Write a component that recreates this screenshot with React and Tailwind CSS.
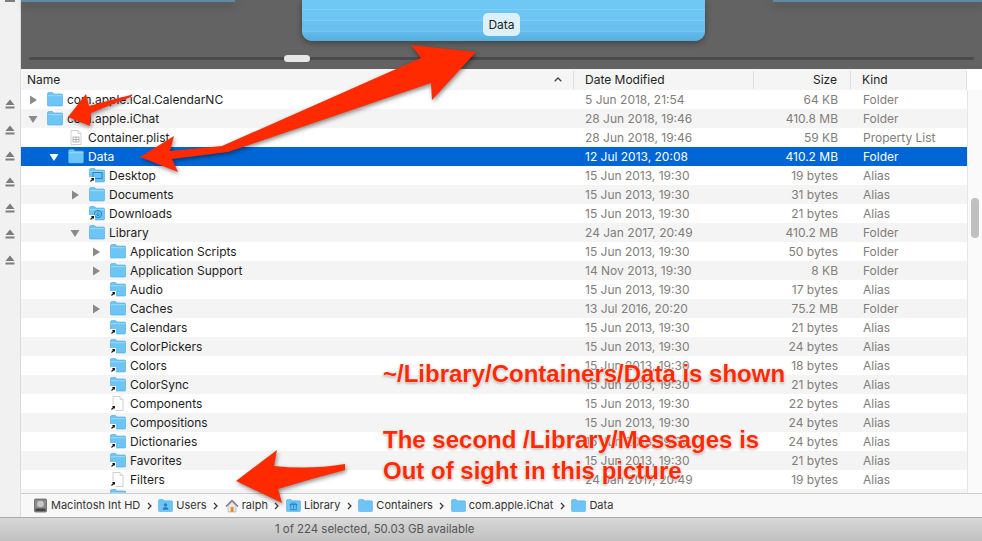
const rows = [
  { name: "com.apple.iCal.CalendarNC", date: "5 Jun 2018, 21:54", size: "64 KB", kind: "Folder", level: 0, arrow: "right", icon: "folder" },
  { name: "com.apple.iChat", date: "28 Jun 2018, 19:46", size: "410.8 MB", kind: "Folder", level: 0, arrow: "down", icon: "folder" },
  { name: "Container.plist", date: "28 Jun 2018, 19:46", size: "59 KB", kind: "Property List", level: 1, icon: "plist" },
  { name: "Data", date: "12 Jul 2013, 20:08", size: "410.2 MB", kind: "Folder", level: 1, arrow: "down", icon: "folder", selected: true },
  { name: "Desktop", date: "15 Jun 2013, 19:30", size: "19 bytes", kind: "Alias", level: 2, icon: "desktop" },
  { name: "Documents", date: "15 Jun 2013, 19:30", size: "31 bytes", kind: "Alias", level: 2, arrow: "right", icon: "folder" },
  { name: "Downloads", date: "15 Jun 2013, 19:30", size: "21 bytes", kind: "Alias", level: 2, icon: "downloads" },
  { name: "Library", date: "24 Jan 2017, 20:49", size: "410.2 MB", kind: "Folder", level: 2, arrow: "down", icon: "folder" },
  { name: "Application Scripts", date: "15 Jun 2013, 19:30", size: "50 bytes", kind: "Folder", level: 3, arrow: "right", icon: "folder" },
  { name: "Application Support", date: "14 Nov 2013, 19:30", size: "8 KB", kind: "Folder", level: 3, arrow: "right", icon: "folder" },
  { name: "Audio", date: "15 Jun 2013, 19:30", size: "17 bytes", kind: "Alias", level: 3, icon: "alias" },
  { name: "Caches", date: "13 Jul 2016, 20:20", size: "75.2 MB", kind: "Folder", level: 3, arrow: "right", icon: "folder" },
  { name: "Calendars", date: "15 Jun 2013, 19:30", size: "21 bytes", kind: "Alias", level: 3, icon: "alias" },
  { name: "ColorPickers", date: "15 Jun 2013, 19:30", size: "24 bytes", kind: "Alias", level: 3, icon: "alias" },
  { name: "Colors", date: "15 Jun 2013, 19:30", size: "18 bytes", kind: "Alias", level: 3, icon: "alias" },
  { name: "ColorSync", date: "15 Jun 2013, 19:30", size: "21 bytes", kind: "Alias", level: 3, icon: "alias" },
  { name: "Components", date: "15 Jun 2013, 19:30", size: "22 bytes", kind: "Alias", level: 3, icon: "filealias" },
  { name: "Compositions", date: "15 Jun 2013, 19:30", size: "24 bytes", kind: "Alias", level: 3, icon: "alias" },
  { name: "Dictionaries", date: "15 Jun 2013, 19:30", size: "24 bytes", kind: "Alias", level: 3, icon: "alias" },
  { name: "Favorites", date: "15 Jun 2013, 19:30", size: "21 bytes", kind: "Alias", level: 3, icon: "alias" },
  { name: "Filters", date: "24 Jan 2017, 20:49", size: "19 bytes", kind: "Alias", level: 3, icon: "filealias" },
];

const indents = ["pl-[5px]", "pl-[26px]", "pl-[47px]", "pl-[68px]"];

function AliasBadge() {
  return (
    <g>
      <rect x="0" y="9" width="6" height="6" fill="#fff" />
      <path d="M1.5 13.5 L4.2 10.8 M2.4 10.6 H4.4 V12.6" stroke="#111" strokeWidth="1.1" fill="none" />
    </g>
  );
}

function Folder({ children }) {
  return (
    <svg width="16" height="15" viewBox="0 0 16 15" className="shrink-0">
      <path d="M0.5 2 Q0.5 0.5 2 0.5 H5.5 L7 2 H14.5 Q15.5 2 15.5 3 V13 Q15.5 14 14.5 14 H1.5 Q0.5 14 0.5 13 Z" fill="#6cc5f5" stroke="#4ea8de" strokeWidth="0.6" />
      <rect x="0.8" y="3.2" width="14.4" height="1" fill="#9adcfb" />
      {children}
    </svg>
  );
}

function FilePage({ children }) {
  return (
    <svg width="16" height="15" viewBox="0 0 16 15" className="shrink-0">
      <path d="M3 0.5 H10 L13 3.5 V14.5 H3 Z" fill="#fff" stroke="#c4c4c4" strokeWidth="0.8" />
      <path d="M10 0.5 V3.5 H13" fill="#eee" stroke="#c4c4c4" strokeWidth="0.6" />
      {children}
    </svg>
  );
}

function RowIcon({ type }) {
  if (type === "plist") {
    return (
      <FilePage>
        <rect x="5" y="7" width="6" height="5" fill="#fff" stroke="#9a9a9a" strokeWidth="0.7" />
        <path d="M5 9.5 H11 M8 7 V12" stroke="#9a9a9a" strokeWidth="0.7" />
      </FilePage>
    );
  }
  if (type === "filealias") {
    return (
      <FilePage>
        <AliasBadge />
      </FilePage>
    );
  }
  if (type === "desktop") {
    return (
      <Folder>
        <rect x="4" y="4.5" width="9" height="6" fill="none" stroke="#2c83c4" strokeWidth="1" />
        <AliasBadge />
      </Folder>
    );
  }
  if (type === "downloads") {
    return (
      <Folder>
        <circle cx="9" cy="8" r="3.6" fill="none" stroke="#2c83c4" strokeWidth="1" />
        <path d="M9 5.5 V9.5 M7.4 8.2 L9 10 L10.6 8.2" stroke="#2c83c4" strokeWidth="0.9" fill="none" />
        <AliasBadge />
      </Folder>
    );
  }
  if (type === "alias") {
    return (
      <Folder>
        <AliasBadge />
      </Folder>
    );
  }
  return <Folder />;
}

function Disclosure({ dir, selected }) {
  const color = selected ? "#fff" : "#8a8a8a";
  return (
    <span className="mr-[7px] flex h-[19px] w-[14px] shrink-0 items-center justify-center">
      {dir && (
        <svg width="10" height="10" viewBox="0 0 10 10">
          {dir === "right" ? <path d="M2 0.5 L9 5 L2 9.5 Z" fill={color} /> : <path d="M0.5 2 H9.5 L5 9 Z" fill={color} />}
        </svg>
      )}
    </span>
  );
}

function Row({ row, index }) {
  const bg = row.selected ? "bg-[#0066d6]" : index % 2 === 1 ? "bg-[#f4f4f4]" : "bg-white";
  const name = row.selected ? "text-white" : "text-[#1d1d1d]";
  const meta = row.selected ? "text-white" : "text-[#827d7a]";
  return (
    <div className={`flex h-[19px] shrink-0 items-center ${bg}`}>
      <div className={`flex w-[564px] items-center ${indents[row.level]}`}>
        <Disclosure dir={row.arrow} selected={row.selected} />
        <RowIcon type={row.icon} />
        <span className={`ml-[4px] ${name}`}>{row.name}</span>
      </div>
      <span className={`w-[190px] ${meta}`}>{row.date}</span>
      <span className={`w-[63px] text-right ${meta} whitespace-nowrap`}>{row.size}</span>
      <span className={`ml-[25px] ${meta}`}>{row.kind}</span>
    </div>
  );
}

function Eject() {
  return (
    <svg width="10" height="10" viewBox="0 0 10 10" className="shrink-0">
      <path d="M5 0.5 L9.5 6 H0.5 Z M0.5 7.6 H9.5 V9.4 H0.5 Z" fill="#7d7d7d" />
    </svg>
  );
}

function Crumb({ children, icon, last }) {
  return (
    <>
      {icon}
      <span className="ml-[3px]">{children}</span>
      {!last && (
        <svg width="5" height="8" viewBox="0 0 5 8" className="mx-[6.5px] shrink-0">
          <path d="M1 1 L4 4 L1 7" fill="none" stroke="#333" strokeWidth="1.2" />
        </svg>
      )}
    </>
  );
}

function PathIconFolder({ glyph }) {
  return (
    <svg width="15" height="13" viewBox="0 0 16 14" className="shrink-0">
      <path d="M0.5 2 Q0.5 0.5 2 0.5 H5.5 L7 2 H14.5 Q15.5 2 15.5 3 V12.5 Q15.5 13.5 14.5 13.5 H1.5 Q0.5 13.5 0.5 12.5 Z" fill="#6cc5f5" stroke="#4ea8de" strokeWidth="0.6" />
      {glyph === "user" && <path d="M8 4.5 a1.8 1.8 0 1 1 -0.01 0 M4.8 11.5 Q5 8.5 8 8.5 Q11 8.5 11.2 11.5 Z" fill="#2a7fc0" />}
      {glyph === "lib" && <path d="M4 11.5 H12 M5 6.5 V10.5 M8 6.5 V10.5 M11 6.5 V10.5 M4 6 L8 4 L12 6 Z" stroke="#2a7fc0" strokeWidth="1" fill="none" />}
    </svg>
  );
}

function Annotations() {
  return (
    <>
      <svg width="982" height="541" viewBox="0 0 982 541" className="pointer-events-none absolute left-0 top-0 drop-shadow-[1px_2px_2px_rgba(0,0,0,0.45)]">
        <path d="M476 52 L411 45 L421 58 L222 146 L170 151 L174 136 L140 157 L178 172 L172 159 L228 152 L431 83 L432 100 Z" fill="#ff2a00" />
        <path d="M68 117 L86 94 L89 106 Q110 100 131 95 L131 97 Q110 105 91 113 L90 126 Z" fill="#ff2a00" />
        <path d="M236 481 L277 450 L274 466 Q310 470 345 464 L345 470 Q310 479 278 489 L282 503 Z" fill="#ff2a00" />
      </svg>
      <div className="absolute left-[383px] top-[360px] whitespace-nowrap font-['Liberation_Sans',sans-serif] text-[24px] font-bold leading-[28px] text-[#ff2a00] [text-shadow:0_0_2px_#fff,0_0_2px_#fff,0_1px_3px_rgba(0,0,0,0.5)]">~/Library/Containers/Data is shown</div>
      <div className="absolute left-[383px] top-[424px] whitespace-nowrap font-['Liberation_Sans',sans-serif] text-[24px] font-bold leading-[31px] text-[#ff2a00] [text-shadow:0_0_2px_#fff,0_0_2px_#fff,0_1px_3px_rgba(0,0,0,0.5)]">
        The second /Library/Messages is
        <br />
        Out of sight in this picture
      </div>
    </>
  );
}

export default function App() {
  return (
    <div className="relative flex h-[541px] w-[982px] flex-col overflow-hidden bg-white font-['Inter','Liberation_Sans',sans-serif] text-[12px] leading-[19px]">
      <div className="flex min-h-0 flex-1">
        {/* sidebar with eject buttons */}
        <div className="flex w-[21px] shrink-0 flex-col items-center gap-[16px] border-r border-[#dcdcdc] bg-[#f1f1f1]">
          <div className="mb-[81px] h-[2px] w-[10px] shrink-0 bg-[#7d7d7d]" />
          <Eject />
          <Eject />
          <Eject />
          <Eject />
          <Eject />
          <Eject />
          <Eject />
        </div>

        <div className="flex min-w-0 flex-1 flex-col">
          {/* gallery preview */}
          <div className="relative flex h-[69px] shrink-0 flex-col bg-[#636363]">
            <div className="flex h-[41px] shrink-0 items-start">
              <div className="h-[2px] w-[214px] bg-[#5d8ba5] shadow-[0_3px_8px_rgba(0,0,0,0.4)]" />
              <div className="relative ml-[67px] flex h-[41px] w-[403px] flex-col overflow-hidden rounded-b-[10px] bg-[#66bfee] shadow-[0_2px_6px_rgba(0,0,0,0.35)]">
                <div className="h-[9px] bg-[#6fc8f3]" />
                <div className="h-[11px] border-t border-[#7fd0f5] bg-[#6cc5f2]" />
                <div className="h-[11px] border-t border-[#7ccdf4] bg-[#68c1ef]" />
                <div className="flex-1 border-t border-[#74c6f0] bg-gradient-to-b from-[#62bbea] to-[#56aedf]" />
                <div className="absolute left-[181px] top-[13px] flex h-[23px] w-[37px] items-center justify-center rounded-[5px] bg-[#dcf0fa] text-[#222]">Data</div>
              </div>
              <div className="ml-[68px] h-[2px] flex-1 bg-[#5d8ba5] shadow-[0_3px_8px_rgba(0,0,0,0.4)]" />
            </div>
            <div className="relative mx-[8px] mt-[16px] h-[3px] rounded-full bg-[#4a4a4a]">
              <div className="absolute left-[255px] top-[-2px] h-[7px] w-[26px] rounded-full bg-[#e8e8e8]" />
            </div>
          </div>

          {/* column header */}
          <div className="mr-[15px] flex h-[22px] shrink-0 items-center border-b border-[#cfcfcf] bg-[#f5f5f5] text-[#222]">
            <div className="flex h-[18px] w-[553px] items-center justify-between border-r border-[#dedede] pl-[6px] pr-[11px]">
              <span>Name</span>
              <svg width="8" height="5" viewBox="0 0 8 5"><path d="M0.7 4.3 L4 1 L7.3 4.3" fill="none" stroke="#444" strokeWidth="1.3" /></svg>
            </div>
            <div className="flex h-[18px] w-[180px] items-center border-r border-[#dedede] pl-[11px]">Date Modified</div>
            <div className="flex h-[18px] w-[97px] items-center justify-end border-r border-[#dedede] pr-[13px]">Size</div>
            <div className="flex h-[18px] flex-1 items-center border-r border-[#dedede] pl-[11px]">Kind</div>
          </div>

          {/* file list */}
          <div className="-mt-[1px] flex min-h-0 flex-1">
            <div className="flex min-w-0 flex-1 flex-col overflow-hidden">
              {rows.map((row, i) => (
                <Row key={row.name} row={row} index={i} />
              ))}
              <div className="flex h-[19px] shrink-0 items-start bg-[#f4f4f4] pl-[89px]">
                <Folder />
              </div>
            </div>
            <div className="flex w-[15px] shrink-0 justify-center border-l border-[#e6e6e6] bg-[#fafafa] pt-[108px]">
              <div className="h-[40px] w-[8px] rounded-full bg-[#c0c0c0]" />
            </div>
          </div>

          {/* path bar */}
          <div className="flex h-[24px] shrink-0 items-center border-t border-[#cfcfcf] bg-[#f8f8f8] pl-[12px] text-[11px] text-[#333]">
            <Crumb icon={
              <svg width="15" height="15" viewBox="0 0 15 15" className="shrink-0">
                <rect x="1.5" y="1" width="12" height="13" rx="1" fill="#8b8b8b" stroke="#555" strokeWidth="0.7" />
                <circle cx="7.5" cy="6" r="3.3" fill="#c8c8c8" />
                <rect x="2.5" y="10.5" width="10" height="2.5" fill="#444" />
              </svg>
            }>Macintosh Int HD</Crumb>
            <Crumb icon={<PathIconFolder glyph="user" />}>Users</Crumb>
            <Crumb icon={
              <svg width="14" height="14" viewBox="0 0 14 14" className="shrink-0">
                <path d="M1 7.5 L7 1.5 L13 7.5" fill="none" stroke="#777" strokeWidth="1.3" />
                <path d="M3 7 V13 H11 V7 L7 3 Z" fill="#e8e8e8" stroke="#999" strokeWidth="0.5" />
                <rect x="5.7" y="8" width="2.8" height="5" fill="#e58a2c" />
              </svg>
            }>ralph</Crumb>
            <Crumb icon={<PathIconFolder glyph="lib" />}>Library</Crumb>
            <Crumb icon={<PathIconFolder />}>Containers</Crumb>
            <Crumb icon={<PathIconFolder />}>com.apple.iChat</Crumb>
            <Crumb icon={<PathIconFolder />} last>Data</Crumb>
          </div>
        </div>
      </div>

      {/* status bar */}
      <div className="flex h-[24px] shrink-0 items-center border-t border-[#aaa] bg-gradient-to-b from-[#d8d8d8] to-[#c0c0c0] pl-[275px] text-[11.4px] text-[#555]">
        1 of 224 selected, 50.03 GB available
      </div>

      <Annotations />
    </div>
  );
}
